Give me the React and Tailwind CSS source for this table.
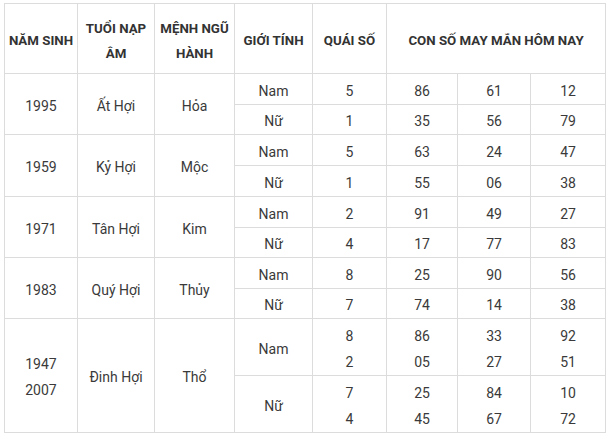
import React from "react";

const groups = [
  { year: ["1995"], tuoi: "Ất Hợi", menh: "Hỏa", rows: [
    { gt: "Nam", qs: ["5"], n: [["86"], ["61"], ["12"]], h: "h-[31px]" },
    { gt: "Nữ", qs: ["1"], n: [["35"], ["56"], ["79"]], h: "h-[30px]" },
  ] },
  { year: ["1959"], tuoi: "Kỷ Hợi", menh: "Mộc", rows: [
    { gt: "Nam", qs: ["5"], n: [["63"], ["24"], ["47"]], h: "h-[31px]" },
    { gt: "Nữ", qs: ["1"], n: [["55"], ["06"], ["38"]], h: "h-[31px]" },
  ] },
  { year: ["1971"], tuoi: "Tân Hợi", menh: "Kim", rows: [
    { gt: "Nam", qs: ["2"], n: [["91"], ["49"], ["27"]], h: "h-[31px]" },
    { gt: "Nữ", qs: ["4"], n: [["17"], ["77"], ["83"]], h: "h-[30px]" },
  ] },
  { year: ["1983"], tuoi: "Quý Hợi", menh: "Thủy", rows: [
    { gt: "Nam", qs: ["8"], n: [["25"], ["90"], ["56"]], h: "h-[31px]" },
    { gt: "Nữ", qs: ["7"], n: [["74"], ["14"], ["38"]], h: "h-[30px]" },
  ] },
  { year: ["1947", "2007"], tuoi: "Đinh Hợi", menh: "Thổ", rows: [
    { gt: "Nam", qs: ["8", "2"], n: [["86", "05"], ["33", "27"], ["92", "51"]], h: "h-[57px]" },
    { gt: "Nữ", qs: ["7", "4"], n: [["25", "45"], ["84", "67"], ["10", "72"]], h: "h-[57px]" },
  ] },
];

const Lines = ({ items }) => (
  <>
    {items.map((t, i) => (
      <div key={i}>{t}</div>
    ))}
  </>
);

const td = "border border-[#dcdcdc] text-center align-middle p-0 pt-[3px]";
const th = "border border-[#dcdcdc] text-center align-middle font-bold text-[13.3px] leading-[25px] text-[#333] p-0 pt-[4px]";

export default function App() {
  return (
    <div className="bg-white min-h-screen pl-[4px] pt-[3px]" style={{ fontFamily: "Roboto, 'Liberation Sans', sans-serif" }}>
      <table className="table-fixed border-collapse w-[601px] text-[14px] text-[#3a3a3a] leading-[26px]">
        <colgroup>
          <col className="w-[73px]" />
          <col className="w-[77px]" />
          <col className="w-[80px]" />
          <col className="w-[78px]" />
          <col className="w-[74px]" />
          <col className="w-[71px]" />
          <col className="w-[73px]" />
          <col className="w-[75px]" />
        </colgroup>
        <thead>
          <tr className="h-[70px]">
            <th className={th}>NĂM SINH</th>
            <th className={th}>TUỔI NẠP<br />ÂM</th>
            <th className={th}>MỆNH NGŨ<br />HÀNH</th>
            <th className={th}>GIỚI TÍNH</th>
            <th className={th}>QUÁI SỐ</th>
            <th className={th} colSpan={3}>CON SỐ MAY MẮN HÔM NAY</th>
          </tr>
        </thead>
        <tbody>
          {groups.map((g, gi) =>
            g.rows.map((r, ri) => (
              <tr key={gi + "-" + ri} className={r.h}>
                {ri === 0 && (
                  <>
                    <td className={td} rowSpan={2}><Lines items={g.year} /></td>
                    <td className={td} rowSpan={2}>{g.tuoi}</td>
                    <td className={td} rowSpan={2}>{g.menh}</td>
                  </>
                )}
                <td className={td}>{r.gt}</td>
                <td className={td}><Lines items={r.qs} /></td>
                {r.n.map((c, ci) => (
                  <td key={ci} className={td}><Lines items={c} /></td>
                ))}
              </tr>
            ))
          )}
        </tbody>
      </table>
    </div>
  );
}
